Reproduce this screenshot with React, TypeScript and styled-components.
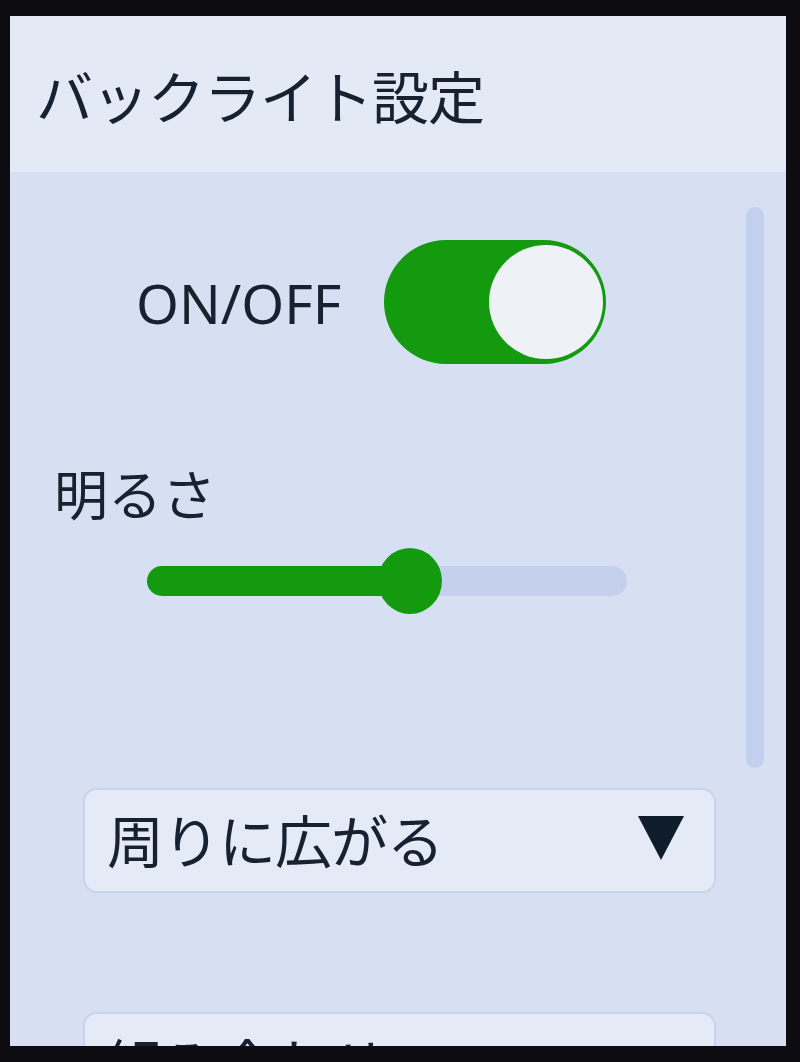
import styled, { createGlobalStyle } from "styled-components";

const GlobalStyle = createGlobalStyle`
  html, body {
    margin: 0;
    padding: 0;
    background: #0d0c10;
  }
  #root {
    width: 800px;
    height: 1062px;
  }
`;

const Bezel = styled.div`
  width: 800px;
  height: 1062px;
  box-sizing: border-box;
  padding: 16px 14px 16px 10px;
  background: #0d0c10;
  display: flex;
`;

const Screen = styled.div`
  flex: 1;
  display: flex;
  flex-direction: column;
  overflow: hidden;
  background: #d6e0f2;
  font-family: "Noto Sans CJK JP", "Noto Sans", sans-serif;
  color: #17212f;
`;

const Header = styled.div`
  height: 156px;
  flex-shrink: 0;
  display: flex;
  align-items: center;
  padding-left: 26px;
  background: #e4eaf5;
`;

const Title = styled.h1`
  margin: 0;
  font-size: 57px;
  font-weight: 400;
  letter-spacing: -1px;
`;

const Body = styled.div`
  flex: 1;
  display: flex;
  min-height: 0;
`;

const Content = styled.div`
  flex: 1;
  display: flex;
  flex-direction: column;
  padding-top: 68px;
`;

const ToggleRow = styled.div`
  display: flex;
  align-items: center;
  gap: 43px;
  padding-left: 126px;
`;

const Label = styled.span`
  font-family: "Noto Sans", sans-serif;
  font-size: 55px;
  font-weight: 400;
`;

const Toggle = styled.div<{ $on: boolean }>`
  width: 222px;
  height: 124px;
  border-radius: 62px;
  background: ${(p) => (p.$on ? "#139a0e" : "#b9c5e3")};
  display: flex;
  align-items: center;
  justify-content: ${(p) => (p.$on ? "flex-end" : "flex-start")};
  padding: 0 3px;
  box-sizing: border-box;
`;

const Knob = styled.div`
  width: 114px;
  height: 114px;
  border-radius: 50%;
  background: #eef1f6;
`;

const SectionLabel = styled.div`
  margin-top: 96px;
  padding-left: 44px;
  font-size: 54px;
  line-height: 66px;
`;

const SliderWrap = styled.div`
  margin: 40px 0 0 137px;
  width: 480px;
  height: 68px;
  display: flex;
  align-items: center;
`;

const Track = styled.div`
  position: relative;
  width: 100%;
  height: 30px;
  border-radius: 15px;
  background: #c4d0ee;
`;

const Fill = styled.div`
  height: 100%;
  border-radius: 15px;
  background: #139a0e;
`;

const Thumb = styled.div`
  position: absolute;
  top: 50%;
  width: 64px;
  height: 66px;
  margin-left: -32px;
  margin-top: -33px;
  border-radius: 50%;
  background: #139a0e;
`;

const Select = styled.div<{ $cut?: boolean }>`
  margin: ${(p) => (p.$cut ? "119px" : "192px")} 0 0 73px;
  width: 633px;
  height: 105px;
  flex-shrink: 0;
  box-sizing: border-box;
  border: 2px solid #c6d4ef;
  border-radius: 14px;
  background: #e5ebf6;
  display: flex;
  align-items: center;
  justify-content: space-between;
  padding: 0 30px 0 22px;
`;

const SelectText = styled.span`
  font-size: 57px;
  letter-spacing: -1px;
  padding-bottom: 6px;
`;

const Arrow = styled.svg`
  width: 46px;
  height: 44px;
  margin-bottom: 6px;
`;

const ScrollRail = styled.div`
  width: 62px;
  flex-shrink: 0;
  display: flex;
  justify-content: center;
  padding-top: 35px;
`;

const ScrollThumb = styled.div`
  width: 18px;
  height: 561px;
  border-radius: 9px;
  background: #c3cfee;
`;

const brightness = 0.548;

export default function App() {
  return (
    <>
      <GlobalStyle />
      <Bezel>
        <Screen>
          <Header>
            <Title>バックライト設定</Title>
          </Header>
          <Body>
            <Content>
              <ToggleRow>
                <Label>ON/OFF</Label>
                <Toggle $on>
                  <Knob />
                </Toggle>
              </ToggleRow>
              <SectionLabel>明るさ</SectionLabel>
              <SliderWrap>
                <Track>
                  <Fill style={{ width: `${brightness * 100}%` }} />
                  <Thumb style={{ left: `${brightness * 100}%` }} />
                </Track>
              </SliderWrap>
              <Select>
                <SelectText>周りに広がる</SelectText>
                <Arrow viewBox="0 0 46 44">
                  <polygon points="0,0 46,0 23,44" fill="#0f1c2b" />
                </Arrow>
              </Select>
              <Select $cut>
                <SelectText>組み合わせ</SelectText>
              </Select>
            </Content>
            <ScrollRail>
              <ScrollThumb />
            </ScrollRail>
          </Body>
        </Screen>
      </Bezel>
    </>
  );
}
